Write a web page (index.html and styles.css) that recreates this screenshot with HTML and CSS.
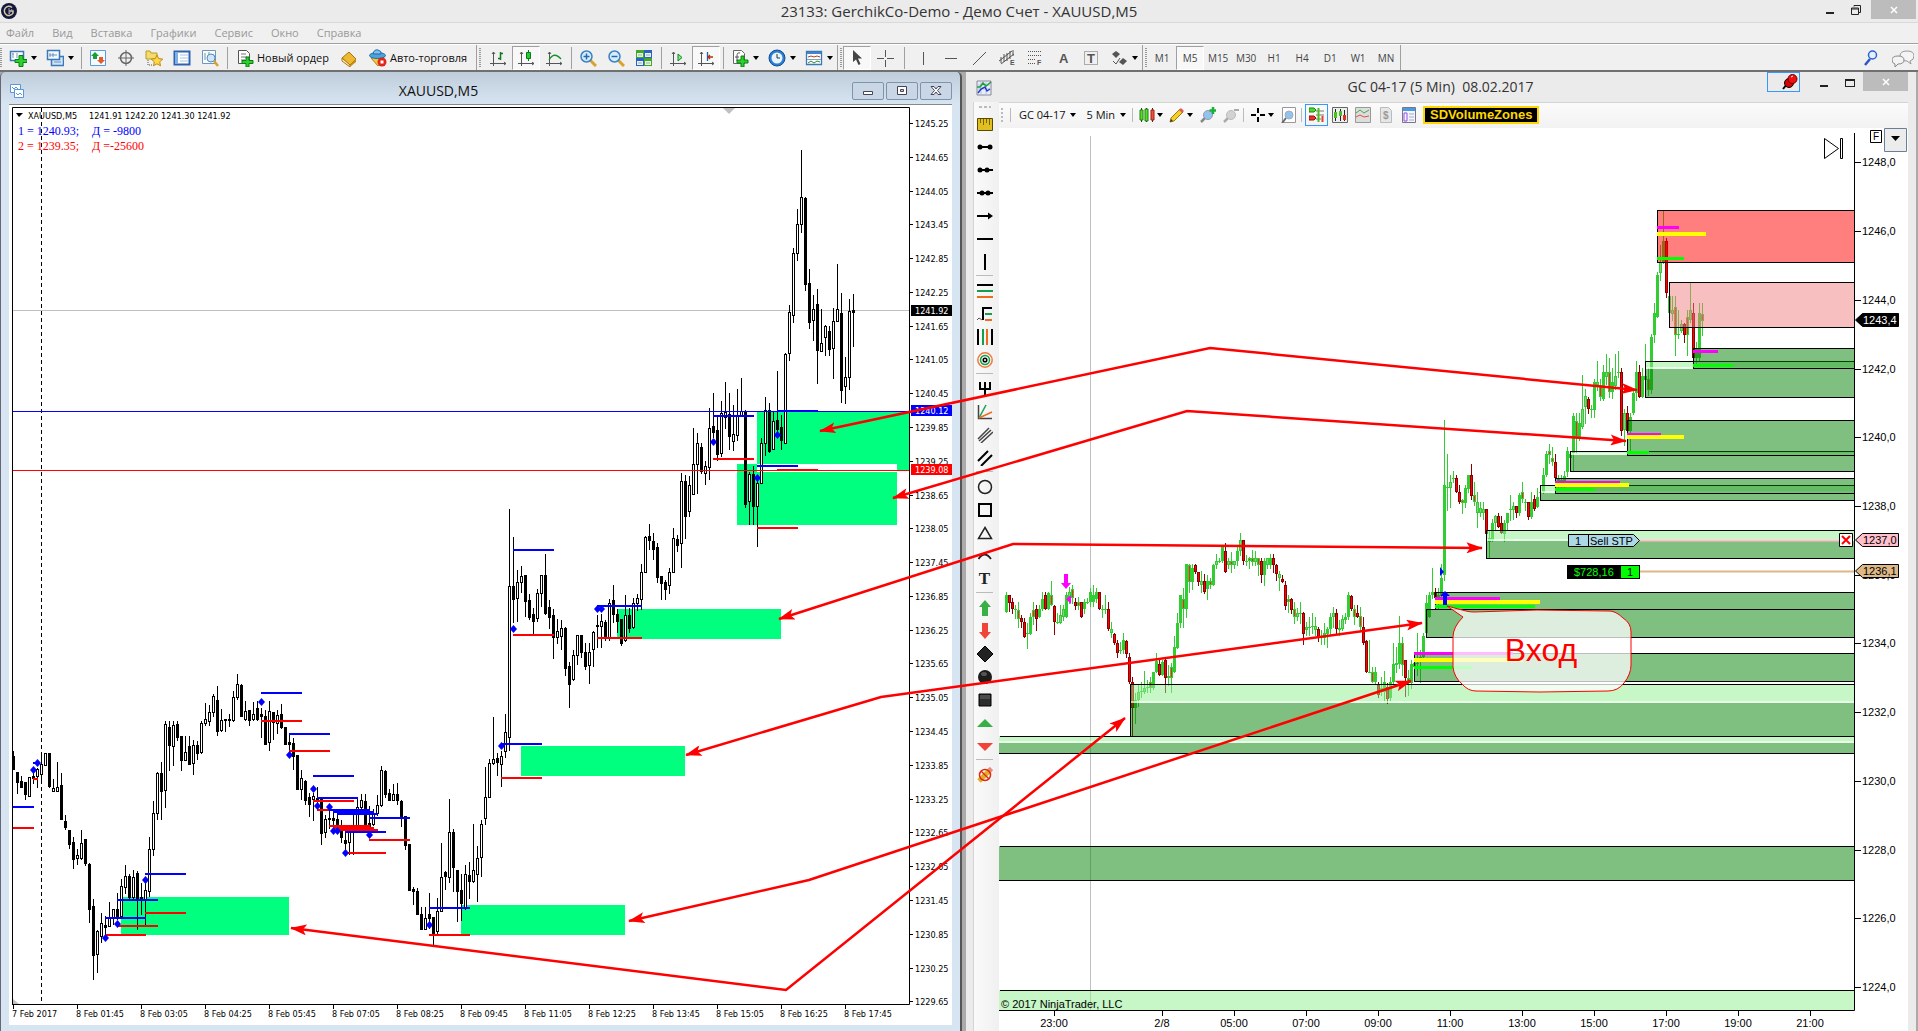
FILE: index.html
```
<!DOCTYPE html>
<html lang="ru">
<head>
<meta charset="utf-8">
<title>23133: GerchikCo-Demo - Демо Счет - XAUUSD,M5</title>
<link rel="stylesheet" href="styles.css">
</head>
<body>
<header class="titlebar">
  <svg class="app-logo" viewBox="0 0 16 16"><circle cx="8" cy="8" r="8" fill="#14183a"/><path d="M11 4.5A4.6 4.6 0 1 0 12 10V8H8" fill="none" stroke="#d8c9a4" stroke-width="1.5"/><path d="M8 5v6l3-5" fill="none" stroke="#9aa0c0"/></svg>
  <h1 class="title">23133: GerchikCo-Demo - Демо Счет - XAUUSD,M5</h1>
  <div class="win-controls">
    <button aria-label="Свернуть"><svg viewBox="0 0 12 12"><path d="M2 8h8v2H2z" fill="#222"/></svg></button>
    <button aria-label="Восстановить"><svg viewBox="0 0 12 12"><path d="M4 2.500V1.500h6.500v7H9M1.500 4h7v6.500h-7zM1.500 5h7" fill="none" stroke="#222"/></svg></button>
    <button class="close" aria-label="Закрыть"><svg viewBox="0 0 12 12"><path d="M3 3l6 6M9 3l-6 6" stroke="#fff" stroke-width="1.500"/></svg></button>
  </div>
</header>
<nav class="menu">
  <button>Файл</button><button>Вид</button><button>Вставка</button><button>Графики</button><button>Сервис</button><button>Окно</button><button>Справка</button>
</nav>
<div class="toolbar">
  <div class="group">
    <button class="tool drop" aria-label="Новый график"><svg viewBox="0 0 18 18"><path d="M1.500 2.500h13v9h-13z" fill="#fff" stroke="#3a78b8" stroke-width="1.500"/><path d="M4 4v5m-1-4h2M8 4v5" stroke="#7898b8"/><path d="M10 6.500h4v4h4v3h-4v4h-4v-4H6v-3h4z" fill="#2cd22c" stroke="#0b7d14"/></svg></button>
    <button class="tool drop" aria-label="Профили"><svg viewBox="0 0 18 18"><path d="M5.500 7.500h12v9h-12z" fill="#cfe4f6" stroke="#3a78b8" stroke-width="1.500"/><path d="M1.500 1.500h12v9h-12z" fill="#f4f9ff" stroke="#3a78b8" stroke-width="1.500"/><path d="M4 4v4m3-4v4M3 6h8M8 13h7" stroke="#6b95bd"/></svg></button>
    <span class="sep"></span>
    <button class="tool" aria-label="Обзор рынка"><svg viewBox="0 0 18 18"><path d="M1.500 1.500h15v15h-15z" fill="#f5faff" stroke="#5b9bd8"/><path d="M6 3l4 4H8v3H4V7H2z" fill="#18a030"/><path d="M12 15l-4-4h2V8h4v3h2z" fill="#e65a2a"/></svg></button>
    <button class="tool" aria-label="Окно данных"><svg viewBox="0 0 18 18"><circle cx="9" cy="9" r="5.500" fill="none" stroke="#666" stroke-width="1.500"/><path d="M9 1v16M1 9h16" stroke="#666"/></svg></button>
    <button class="tool" aria-label="Навигатор"><svg viewBox="0 0 18 18"><path d="M1 2h4l1 2h6v6H1z" fill="#f3dc6a" stroke="#b79a28"/><path d="M3 11v5h4" fill="none" stroke="#555" stroke-dasharray="1 1"/><path d="M12 6l1.700 3.600 4 .5-3 2.700.8 4-3.500-2-3.500 2 .8-4-3-2.700 4-.5z" fill="#ffd84a" stroke="#c08a10"/></svg></button>
    <button class="tool" aria-label="Терминал"><svg viewBox="0 0 18 18"><path d="M1.500 2.500h15v13h-15z" fill="#fff" stroke="#2f62b0" stroke-width="2"/><path d="M2 3h3v12H2z" fill="#7fb0e6"/><path d="M7 6h8M7 9h8M7 12h8" stroke="#aac4e2"/></svg></button>
    <button class="tool" aria-label="Тестер стратегий"><svg viewBox="0 0 18 18"><path d="M1.500 1.500h13v13h-13z" fill="#f6fbff" stroke="#6f97bd"/><path d="M4 4v7M8 3v6M12 5v5" stroke="#7a93ab"/><circle cx="10" cy="9" r="4" fill="#cfe6f8" stroke="#5b8ab8"/><path d="M13 12l4 5" stroke="#d9a32a" stroke-width="2.500"/></svg></button>
    <span class="sep"></span>
    <button class="tool wide"><svg viewBox="0 0 18 18"><path d="M2.500 1.500h8l3 3v10h-11z" fill="#fff" stroke="#555"/><path d="M5 5h5M5 8h6M5 11h4" stroke="#777"/><path d="M10 8h3v3.500h4v3h-4V18h-3v-3.500H6v-3h4z" fill="#2cd22c" stroke="#0b7d14"/></svg>Новый ордер</button>
    <button class="tool" aria-label="MetaEditor"><svg viewBox="0 0 18 18"><path d="M2 9l7-6 7 7-6 6z" fill="#eeb930" stroke="#a37512"/><path d="M2 9v3l8 6v-2z" fill="#fff0b8" stroke="#a37512"/><path d="M10 16l6-6v3l-6 5z" fill="#c98e18"/></svg></button>
    <button class="tool wide"><svg viewBox="0 0 18 18"><path d="M2 9l12-2 1 4-6 6z" fill="#f0c445" stroke="#b48413"/><ellipse cx="8.500" cy="6.500" rx="8" ry="3" fill="#4da3dc" stroke="#1f6ca8"/><path d="M4 5q1-5 5-4t3 4z" fill="#7cc2ee" stroke="#1f6ca8"/><circle cx="13" cy="13" r="4.500" fill="#e02818"/><path d="M11.500 11.500h3v3h-3z" fill="#fff"/></svg>Авто-торговля</button>
  </div>
  <div class="group">
    <button class="tool" aria-label="Бары"><svg viewBox="0 0 18 18"><path d="M4.500 3v14M1 14.500h16M3 5l1.500-2L6 5M15 13l2 1.500-2 1.500" fill="none" stroke="#555"/><path d="M11.500 3v8M9 9.500h2.500M11.500 4.500H14" stroke="#0a7a1a" stroke-width="1.500"/></svg></button>
    <button class="tool on" aria-label="Свечи"><svg viewBox="0 0 18 18"><path d="M4.500 3v14M1 14.500h16M3 5l1.500-2L6 5M15 13l2 1.500-2 1.500" fill="none" stroke="#555"/><path d="M11.500 1v11" stroke="#0a7a1a"/><path d="M9.500 3.500h4v6h-4z" fill="#20d030" stroke="#0a7a1a"/></svg></button>
    <button class="tool" aria-label="Линия"><svg viewBox="0 0 18 18"><path d="M4.500 3v14M1 14.500h16M3 5l1.500-2L6 5M15 13l2 1.500-2 1.500" fill="none" stroke="#555"/><path d="M4 11q5-9 12-1" fill="none" stroke="#18902a" stroke-width="1.300"/></svg></button>
    <span class="sep"></span>
    <button class="tool" aria-label="Увеличить"><svg viewBox="0 0 18 18"><path d="M11 11l6 6" stroke="#d9a32a" stroke-width="3"/><circle cx="7.500" cy="7.500" r="5.500" fill="#d6ecfb" stroke="#3a82c4" stroke-width="1.500"/><path d="M4.500 7.500h6M7.500 4.500v6" stroke="#2568b0" stroke-width="1.500"/></svg></button>
    <button class="tool" aria-label="Уменьшить"><svg viewBox="0 0 18 18"><path d="M11 11l6 6" stroke="#d9a32a" stroke-width="3"/><circle cx="7.500" cy="7.500" r="5.500" fill="#d6ecfb" stroke="#3a82c4" stroke-width="1.500"/><path d="M4.500 7.500h6" stroke="#2568b0" stroke-width="1.500"/></svg></button>
    <button class="tool" aria-label="Окна мозаикой"><svg viewBox="0 0 18 18"><path d="M1 1h8v8H1zM9 9h8v8H9z" fill="#42a828"/><path d="M9 1h8v8H9zM1 9h8v8H1z" fill="#2a62c8"/><path d="M2 4h6v4H2zM10 4h6v4h-6zM2 12h6v4H2zM10 12h6v4h-6z" fill="#eaf4e6"/><path d="M3 6h4M11 6h4M3 14h4M11 14h4" stroke="#9ab"/></svg></button>
    <span class="sep"></span>
    <button class="tool" aria-label="Автопрокрутка"><svg viewBox="0 0 18 18"><path d="M4.500 3v14M1 14.500h16M3 5l1.500-2L6 5M15 13l2 1.500-2 1.500" fill="none" stroke="#555"/><path d="M9 5v7l4-3.500z" fill="#8fe090" stroke="#0a8a20"/></svg></button>
    <button class="tool on" aria-label="Сдвиг графика"><svg viewBox="0 0 18 18"><path d="M4.500 3v14M1 14.500h16M3 5l1.500-2L6 5M15 13l2 1.500-2 1.500" fill="none" stroke="#555"/><path d="M10.500 3v9" stroke="#1a62b0" stroke-width="1.300"/><path d="M16 8h-5m2-2l-2 2 2 2" stroke="#b03010" fill="none" stroke-width="1.300"/></svg></button>
    <span class="sep"></span>
    <button class="tool drop" aria-label="Индикаторы"><svg viewBox="0 0 18 18"><path d="M2.500 1.500h8l3 3v10h-11z" fill="#fff" stroke="#666"/><path d="M9 4q-3-1-3 3v5M4 8h4" fill="none" stroke="#555"/><path d="M10 7h3v4h4v3h-4v4h-3v-4H6v-3h4z" fill="#2cd22c" stroke="#0b7d14"/></svg></button>
    <button class="tool drop" aria-label="Периоды"><svg viewBox="0 0 18 18"><circle cx="9" cy="9" r="8" fill="#2a7ed2" stroke="#0f4f96"/><circle cx="9" cy="9" r="5.500" fill="#e8f4fd"/><path d="M9 5v4h3" fill="none" stroke="#333"/></svg></button>
    <button class="tool drop" aria-label="Шаблоны"><svg viewBox="0 0 18 18"><path d="M1.500 2.500h15v13h-15z" fill="#fff" stroke="#3a78b8" stroke-width="1.300"/><path d="M2 3h14v2H2z" fill="#3f86cc"/><path d="M2 10.500h14" stroke="#7aa4cc"/><path d="M3 8l3-1 3 1 3-1 3 1" fill="none" stroke="#b04020"/><path d="M3 14l3-2 3 2 3-2 3 1" fill="none" stroke="#209030"/></svg></button>
  </div>
  <div class="group">
    <button class="tool on" aria-label="Курсор"><svg viewBox="0 0 18 18"><path d="M5 1v12l3-2.500 2.500 5.500 2-1-2.500-5.500h4z" fill="#444"/></svg></button>
    <button class="tool" aria-label="Перекрестие"><svg viewBox="0 0 18 18"><path d="M9.500 1v7m0 3v7M1 9.500h7m3 0h7" stroke="#555"/></svg></button>
    <span class="sep roomy"></span>
    <button class="tool" aria-label="Вертикальная линия"><svg viewBox="0 0 18 18"><path d="M9.500 3v13" stroke="#555"/></svg></button>
    <button class="tool" aria-label="Горизонтальная линия"><svg viewBox="0 0 18 18"><path d="M3 9.500h12" stroke="#555"/></svg></button>
    <button class="tool" aria-label="Трендовая линия"><svg viewBox="0 0 18 18"><path d="M3 16L16 3" stroke="#555"/></svg></button>
    <button class="tool" aria-label="Канал"><svg viewBox="0 0 18 18"><path d="M1 12L14 2M3 15L16 5M3 8v6M6 5v8M9 4v8M12 2v8M15 1v6" stroke="#555"/><text x="12" y="16" class="glyph tiny">E</text></svg></button>
    <button class="tool" aria-label="Фибоначчи"><svg viewBox="0 0 18 18"><path d="M2 2.500h13M2 6.500h13M2 10.500h7M2 14.500h7" stroke="#555" stroke-dasharray="1 1"/><text x="11" y="16" class="glyph tiny">F</text></svg></button>
    <button class="tool" aria-label="Текст"><svg viewBox="0 0 18 18"><text x="5" y="14" class="glyph">A</text></svg></button>
    <button class="tool" aria-label="Метка"><svg viewBox="0 0 18 18"><path d="M2.500 2.500h13v13h-13z" fill="none" stroke="#666" stroke-dasharray="1 1"/><text x="5" y="14" class="glyph">T</text></svg></button>
    <button class="tool drop" aria-label="Стрелки"><svg viewBox="0 0 18 18"><path d="M6 2l4 3-4 4-4-4zM13 9l4 3-4 4-4-3z" fill="#555"/><path d="M3 12l3 3 4-6" fill="none" stroke="#555"/></svg></button>
  </div>
  <div class="group">
    <button class="tool tf">M1</button><button class="tool tf on">M5</button><button class="tool tf">M15</button><button class="tool tf">M30</button><button class="tool tf">H1</button><button class="tool tf">H4</button><button class="tool tf">D1</button><button class="tool tf">W1</button><button class="tool tf">MN</button>
  </div>
  <div class="right-tools">
    <button class="tool" aria-label="Поиск"><svg viewBox="0 0 18 18"><path d="M8 10l-5 6" stroke="#2a56c8" stroke-width="2.500"/><circle cx="10.500" cy="6" r="4" fill="#e6f0fb" stroke="#2a62d0" stroke-width="1.500"/></svg></button>
    <button class="tool chat" aria-label="Чат"><svg viewBox="0 0 22 18"><path d="M8 7q0-5 7-5t7 5q0 4-4 5l1 3-4-3q-7 0-7-5z" fill="#f4f4f4" stroke="#999"/><path d="M0 11q0-4 6-4t6 4-6 4l-3 3v-3q-3-1-3-4z" fill="#f4f4f4" stroke="#888"/></svg></button>
  </div>
</div>
<main class="workspace">
  <section class="mt">
    <header class="mt-title">
      <svg class="icon" viewBox="0 0 16 16"><path d="M1.500 1.500h10v8h-10z" fill="#fff" stroke="#5a96dc"/><path d="M5.500 6.500h9v8h-9z" fill="#fff" stroke="#5a96dc"/><path d="M3 4l2 2 2-2 2 2M7 10l2 2 2-2 2 2" fill="none" stroke="#5a96dc"/></svg>
      <h2 class="title">XAUUSD,M5</h2>
      <div class="mt-controls">
        <button aria-label="Свернуть окно"><svg viewBox="0 0 14 12"><path d="M2.500 6.500h9v3h-9z" fill="#fff" stroke="#445"/></svg></button>
        <button aria-label="Развернуть окно"><svg viewBox="0 0 14 12"><path d="M2.500 1.500h9v8h-9z" fill="#fff" stroke="#445"/><path d="M5.500 4.500h3v2h-3z" fill="#ccd" stroke="#445"/></svg></button>
        <button aria-label="Закрыть окно"><svg viewBox="0 0 14 12"><path d="M2 1.500h3l2 2.500 2-2.500h3L8.500 5.500 12 9.500H9L7 7 5 9.500H2l3.500-4z" fill="#fff" stroke="#445"/></svg></button>
      </div>
    </header>
    <div class="mt-client">
      <svg class="chart" id="mt-chart" viewBox="9 105 943 920" preserveAspectRatio="xMinYMin meet">
        <g fill="#00ff7f">
          <path d="M757 412h152v59h-12v-7H757z"/><path d="M737 464h20v8h140v53H737z"/>
          <rect x="617" y="609" width="164" height="30"/><rect x="521" y="746" width="164" height="30"/>
          <rect x="461" y="905" width="164" height="30"/><rect x="121" y="897" width="168" height="38"/>
        </g>
        <path d="M13 310.500h896" stroke="#c0c0c0"/>
        <path d="M41.500 108v896" stroke="#000" stroke-dasharray="4 3"/>
        <g id="mt-candles" shape-rendering="crispEdges"></g>
        <path d="M13 411.500h896" stroke="#0000ff"/><path d="M13 470.500h896" stroke="#ff0000"/>
        <g id="mt-levels"></g>
        <path d="M12.500 1004V107.500h897V1004.500H12" fill="none" stroke="#000"/>
        <path d="M13 999l6 5h-6z" fill="#c0c0c0"/><path d="M723 108h12l-6 6z" fill="#c0c0c0"/>
        <g id="mt-axis" class="mt-text"></g>
        <path d="M16 113h7l-4 4z"/>
        <text x="28" y="119" class="mt-text">XAUUSD,M5</text><text x="89" y="119" class="mt-text">1241.91 1242.20 1241.30 1241.92</text>
        <text x="18" y="135" class="times" fill="#0000ff">1 = 1240.93;</text><text x="92" y="135" class="times" fill="#0000ff">Д = -9800</text>
        <text x="18" y="150" class="times" fill="#ff0000">2 = 1239.35;</text><text x="92" y="150" class="times" fill="#ff0000">Д =-25600</text>
      </svg>
    </div>
  </section>
  <section class="nt">
    <header class="nt-title">
      <svg class="icon" viewBox="0 0 16 16"><path d="M1 1h14v14H1z" fill="#e8ecfa" stroke="#889"/><path d="M1 5h14M1 9h14M5 1v14M10 1v14" stroke="#b9c2dc"/><path d="M1 7h3l3-4 3 3 5-4" fill="none" stroke="#20a030" stroke-width="1.500"/><path d="M2 13l3-4 4-2 2 4 3-2" fill="none" stroke="#2040c0" stroke-width="1.500"/></svg>
      <h2 class="title">GC 04-17 (5 Min)&nbsp; 08.02.2017</h2>
      <div class="nt-controls">
        <button class="pin" aria-label="Закрепить"><svg viewBox="0 0 16 16"><path d="M5 10l-4 5" stroke="#000" stroke-width="2"/><circle cx="7" cy="9" r="4.500" fill="#d80000" stroke="#000"/><circle cx="10.500" cy="5" r="4.500" fill="#f01010" stroke="#600"/><path d="M9 3l2-1" stroke="#fff"/></svg></button>
        <button aria-label="Свернуть"><svg viewBox="0 0 12 12"><path d="M2 9h8v2H2z" fill="#222"/></svg></button>
        <button aria-label="Развернуть"><svg viewBox="0 0 12 12"><path d="M1 3h10v8H1zM2 5v5h8V5z" fill="#222" fill-rule="evenodd"/></svg></button>
        <button class="close" aria-label="Закрыть"><svg viewBox="0 0 12 12"><path d="M3 3l6 6M9 3l-6 6" stroke="#fff" stroke-width="1.500"/></svg></button>
      </div>
    </header>
    <div class="nt-body">
      <div class="draw-tools">
        <span class="dots"></span>
        <button aria-label="Линейка"><svg viewBox="0 0 16 16"><path d="M.5 2.500h15v12H.5z" fill="#e0c020" stroke="#5a4a00"/><path d="M3.500 3v4M6.500 3v6M9.500 3v4M12.500 3v6" stroke="#7a6400"/></svg></button>
        <button aria-label="Отрезок"><svg viewBox="0 0 16 16"><path d="M2 8h12" stroke="#000" stroke-width="2"/><circle cx="3" cy="8" r="2.500"/><circle cx="13" cy="8" r="2.500"/></svg></button>
        <button aria-label="Луч"><svg viewBox="0 0 16 16"><path d="M2 8h14" stroke="#000" stroke-width="2"/><circle cx="3" cy="8" r="2.500"/><circle cx="10" cy="8" r="2.500"/></svg></button>
        <button aria-label="Прямая"><svg viewBox="0 0 16 16"><path d="M0 8h16" stroke="#000" stroke-width="2"/><circle cx="5" cy="8" r="2.500"/><circle cx="11" cy="8" r="2.500"/></svg></button>
        <button aria-label="Стрелка"><svg viewBox="0 0 16 16"><path d="M0 8h13" stroke="#000" stroke-width="2"/><path d="M11 4.500L16 8l-5 3.500z"/></svg></button>
        <button aria-label="Горизонталь"><svg viewBox="0 0 16 16"><path d="M0 8h16" stroke="#000" stroke-width="2"/></svg></button>
        <button aria-label="Вертикаль"><svg viewBox="0 0 16 16"><path d="M8 0v16" stroke="#000" stroke-width="2"/></svg></button>
        <hr>
        <button aria-label="Коррекция"><svg viewBox="0 0 16 16"><path d="M0 2h16" stroke="#000" stroke-width="2"/><path d="M0 8h16" stroke="#12a04a" stroke-width="2"/><path d="M0 14h16" stroke="#f06a20" stroke-width="2"/></svg></button>
        <button aria-label="Расширение"><svg viewBox="0 0 16 16"><path d="M15 2H6v12" fill="none" stroke="#000" stroke-width="2"/><path d="M8 8h7" stroke="#12a04a" stroke-width="2"/><path d="M8 14h7" stroke="#f06a20" stroke-width="2"/><path d="M0 14l2-2 3 2" fill="none" stroke="#555"/></svg></button>
        <button aria-label="Временные зоны"><svg viewBox="0 0 16 16"><path d="M1 0v16M15 0v16" stroke="#000" stroke-width="2"/><path d="M6 0v16" stroke="#12a04a" stroke-width="2"/><path d="M10 0v16" stroke="#f06a20" stroke-width="2"/></svg></button>
        <button aria-label="Окружности"><svg viewBox="0 0 16 16"><g fill="none" stroke-width="1.500"><circle cx="8" cy="8" r="7.200" stroke="#f07a40"/><circle cx="8" cy="8" r="4.500" stroke="#12a04a"/><circle cx="8" cy="8" r="1.800" stroke="#000"/></g></svg></button>
        <hr>
        <button aria-label="Вилы"><svg viewBox="0 0 16 16"><path d="M3 1v7h10V1M8 1v15" fill="none" stroke="#000" stroke-width="2"/></svg></button>
        <button aria-label="Веер Ганна"><svg viewBox="0 0 16 16"><path d="M1.500 1v13.500H15" fill="none" stroke="#444" stroke-width="1.500"/><path d="M2 14L9 1" stroke="#12a04a" stroke-width="1.500"/><path d="M2 14l13-6" stroke="#f06a20" stroke-width="1.500"/></svg></button>
        <button aria-label="Регрессия"><svg viewBox="0 0 16 16"><path d="M1 12L12 1M2 14L14 3M4 16L16 5" stroke="#444" stroke-width="1.500"/></svg></button>
        <button aria-label="Канал тренда"><svg viewBox="0 0 16 16"><path d="M1 11L11 1M4 16L15 5" stroke="#000" stroke-width="2"/></svg></button>
        <hr>
        <button aria-label="Эллипс"><svg viewBox="0 0 16 16"><circle cx="8" cy="8" r="6.500" fill="none" stroke="#222" stroke-width="1.500"/></svg></button>
        <button aria-label="Прямоугольник"><svg viewBox="0 0 16 16"><path d="M2 2h12v12H2z" fill="none" stroke="#000" stroke-width="2"/></svg></button>
        <button aria-label="Треугольник"><svg viewBox="0 0 16 16"><path d="M8 2.500L14.500 13.500h-13z" fill="none" stroke="#222" stroke-width="1.500"/></svg></button>
        <button aria-label="Дуга"><svg viewBox="0 0 16 16"><path d="M1.500 11q6-9 12.500 0" fill="none" stroke="#222" stroke-width="1.800"/></svg></button>
        <button class="serif-t" aria-label="Надпись">T</button>
        <hr>
        <button aria-label="Стрелка вверх"><svg viewBox="0 0 16 16"><path d="M8 0l6 7h-3v9H5V7H2z" fill="#38b048"/></svg></button>
        <button aria-label="Стрелка вниз"><svg viewBox="0 0 16 16"><path d="M8 16l6-7h-3V0H5v9H2z" fill="#f04438"/></svg></button>
        <button aria-label="Ромб"><svg viewBox="0 0 16 16"><path d="M8 0l8 8-8 8-8-8z" fill="#222" stroke="#000"/></svg></button>
        <button aria-label="Точка"><svg viewBox="0 0 16 16"><circle cx="8" cy="8" r="7" fill="#1c1c1c"/><ellipse cx="7" cy="5" rx="3" ry="2" fill="#555"/></svg></button>
        <button aria-label="Квадрат"><svg viewBox="0 0 16 16"><path d="M2 2h12v12H2z" fill="#2c2c2c" stroke="#000"/><path d="M3 3h10v4H3z" fill="#4c4c4c"/></svg></button>
        <button aria-label="Треугольник вверх"><svg viewBox="0 0 16 16"><path d="M8 4l8 8H0z" fill="#38b048"/></svg></button>
        <button aria-label="Треугольник вниз"><svg viewBox="0 0 16 16"><path d="M8 13l8-8H0z" fill="#f04438"/></svg></button>
        <hr>
        <button aria-label="Удалить объекты"><svg viewBox="0 0 16 16"><path d="M2 14L14 2" stroke="#e0b020" stroke-width="5"/><path d="M12 1l3 3" stroke="#e88" stroke-width="3"/><circle cx="8" cy="8" r="5.500" fill="none" stroke="#e02818" stroke-width="1.500"/><path d="M4 4l8 8" stroke="#e02818" stroke-width="1.500"/></svg></button>
      </div>
      <div class="nt-main">
        <div class="nt-toolbar">
          <span class="vdots"></span><span class="bar"></span>
          <button class="combo">GC 04-17</button><button class="combo">5 Min</button>
          <span class="bar"></span>
          <button class="nt-tool nt-drop" aria-label="Тип баров"><svg viewBox="0 0 16 16"><path d="M2.500 1v14M7.500 1v14M13.500 1v14" stroke="#333"/><path d="M1 3h3v10H1zM6 2h3v12H6z" fill="#58e020" stroke="#208010"/><path d="M12 3h3v10h-3z" fill="#f05040" stroke="#a02010"/></svg></button>
          <button class="nt-tool nt-drop" aria-label="Рисование"><svg viewBox="0 0 16 16"><path d="M1 15l1-4 9-9 3 3-9 9z" fill="#f4d020" stroke="#a07810"/><path d="M10 3l2-2 3 3-2 2z" fill="#e05a5a"/><path d="M1 15l1-3 2 2z" fill="#333"/></svg></button>
          <button class="nt-tool" aria-label="Увеличить"><svg viewBox="0 0 16 16"><path d="M6 10l-5 5" stroke="#888" stroke-width="2.500"/><circle cx="8" cy="8" r="4.500" fill="#8ec4ee" stroke="#99a"/><path d="M13 0v7M9.500 3.500h7" stroke="#18b038" stroke-width="2.500"/></svg></button>
          <button class="nt-tool" aria-label="Уменьшить"><svg viewBox="0 0 16 16"><path d="M6 10l-5 5" stroke="#aaa" stroke-width="2.500"/><circle cx="8" cy="8" r="4.500" fill="#d2d2d2" stroke="#bbb"/><path d="M11 3h5" stroke="#aaa" stroke-width="2"/></svg></button>
          <span class="bar"></span>
          <button class="nt-tool nt-drop" aria-label="Курсор"><svg viewBox="0 0 16 16"><path d="M8 1v5m0 4v5M1 8h5m4 0h5" stroke="#000" stroke-width="2"/></svg></button>
          <button class="nt-tool" aria-label="Лупа"><svg viewBox="0 0 16 16"><path d="M1.500.5h13v15h-13z" fill="#fff" stroke="#999"/><path d="M5 11l-4 5" stroke="#667" stroke-width="2"/><circle cx="8" cy="8" r="4" fill="#8ec4ee" stroke="#aab"/></svg></button>
          <span class="bar"></span>
          <button class="nt-tool selected" aria-label="Торговля с графика"><svg viewBox="0 0 16 16"><path d="M7 4h8M7 8h8M7 12h5" stroke="#777"/><path d="M0 1h5l2 2-2 2H0z" fill="#48e020" stroke="#208010"/><path d="M0 9h5l2 2-2 2H0z" fill="#f03020" stroke="#901010"/><path d="M9.500 1v14" stroke="#48c020" stroke-width="2"/><path d="M13.500 9v6" stroke="#e04030" stroke-width="2"/></svg></button>
          <button class="nt-tool" aria-label="Данные"><svg viewBox="0 0 16 16"><path d="M.5.500h15v15H.500z" fill="#eee" stroke="#666"/><path d="M3.500 2v12M8.500 2v12M12.500 3v11" stroke="#222"/><path d="M2 5h3v6H2zM7 4h3v5H7z" fill="#48c020"/><path d="M11 8h3v5h-3z" fill="#e03020"/></svg></button>
          <button class="nt-tool" aria-label="Индикаторы"><svg viewBox="0 0 16 16"><path d="M.5.500h15v15H.500z" fill="#ddd" stroke="#999"/><path d="M1 6l4-3 4 3 5-3" fill="none" stroke="#38b048"/><path d="M1 10l4-2 4 2 5-1" fill="none" stroke="#e05040"/></svg></button>
          <button class="nt-tool" aria-label="Стратегии"><svg viewBox="0 0 16 16"><path d="M2.500.500h8l3 3v12h-11z" fill="#e6e6e6" stroke="#bbb"/><text x="5" y="12" class="dollar">$</text></svg></button>
          <button class="nt-tool" aria-label="Свойства"><svg viewBox="0 0 16 16"><path d="M1.500.500h13v15h-13z" fill="#f4f4ff" stroke="#778"/><path d="M2 1h12v3H2z" fill="#4a9ae0"/><path d="M3 6h3v8H3z" fill="none" stroke="#9050e0"/><path d="M8 7h5M8 10h5M8 13h5" stroke="#aab"/></svg></button>
          <button class="zones">SDVolumeZones</button>
        </div>
        <svg class="chart" id="nt-chart" viewBox="999 128 909 903" preserveAspectRatio="xMinYMin meet">
          <path d="M1090.500 136v874" stroke="#c0c0c0"/>
          <g id="nt-candles" shape-rendering="crispEdges"></g>
          <g id="nt-zones" shape-rendering="crispEdges"></g>
          <path d="M1064 574h4v9h3l-5 6-5-6h3zM1071 595v9l-5-5z" fill="#ff00ff"/>
          <path d="M1440 567v9l4-4zM1443 605v-9h-3l5-5 5 5h-3v9z" fill="#0000ff"/>
          <path d="M1639 540.500h200" stroke="#ffc0cb" stroke-width="2"/><path d="M1640 571.500h215" stroke="#deb887" stroke-width="2"/>
          <path d="M1568.500 534.500h65l6 6-6 6h-65zM1588.500 534v12" fill="#add8e6" stroke="#000"/>
          <text x="1575" y="545" class="nt-text">1</text><text x="1590" y="545" class="nt-text">Sell STP</text>
          <path d="M1567 565h73v14h-73z"/><path d="M1621 566h18v12h-18z" fill="#00ff00"/>
          <text x="1574" y="576" class="nt-text lime">$728,16</text><text x="1627" y="576" class="nt-text">1</text>
          <path d="M1854.500 133v877.500H999M1824.500 138.500v20l14-10zM1840.500 138.500h2v20h-2z" fill="none" stroke="#000"/>
          <path d="M1870.500 130.500h11v12h-11z" fill="#fff" stroke="#000"/><text x="1873" y="140" class="f-mark">F</text>
          <path d="M1884.500 128.500h22v23h-22z" fill="#ececec" stroke="#6a7f98"/><path d="M1891 136h9l-4.500 5z"/>
          <g id="nt-axis" class="nt-text"></g>
          <path d="M1839.500 533.500h13v13h-13z" fill="#fff" stroke="#000"/><path d="M1842 536l8 8m0-8l-8 8" stroke="#ff0000" stroke-width="2"/>
          <text x="1001" y="1008" class="nt-text">© 2017 NinjaTrader, LLC</text>
        </svg>
      </div>
    </div>
  </section>
</main>
<svg class="notes" viewBox="0 0 1918 1031" preserveAspectRatio="xMinYMin meet" aria-label="Пояснения к графикам">
  <defs><marker id="head" viewBox="0 0 18 12" refX="17" refY="6" markerWidth="17" markerHeight="11" markerUnits="userSpaceOnUse" orient="auto-start-reverse"><path d="M18 6L0 12 4 6 0 0z" fill="#ff0000"/></marker></defs>
  <g fill="none" stroke="#ff0000" stroke-width="2.500">
    <path d="M820 431L1210 348 1637 390" marker-start="url(#head)" marker-end="url(#head)"/>
    <path d="M893 498L1187 411 1626 441" marker-start="url(#head)" marker-end="url(#head)"/>
    <path d="M779 619L1013 544 1482 548" marker-start="url(#head)" marker-end="url(#head)"/>
    <path d="M686 755L881 697 1422 623" marker-start="url(#head)" marker-end="url(#head)"/>
    <path d="M629 921L809 880 1411 681" marker-start="url(#head)" marker-end="url(#head)"/>
    <path d="M291 928L786 990 1125 718" marker-start="url(#head)" marker-end="url(#head)"/>
  </g>
  <path d="M1447 606l16 11q-10 10-10 20v30q1 10 9 17 6 7 14 7l64 1 68-1q10 0 16-8 7-9 7-18v-33q0-9-8-14-8-8-16-7l-70-1-63 2q-4 0-8-1z" fill="#fff" fill-opacity=".74" stroke="#ff0000"/>
  <text x="1541" y="661" class="callout">Вход</text>
</svg>
<script src="charts.js"></script>
</body>
</html>
```
FILE: styles.css
```
* { box-sizing: border-box; }
body {
  margin: 0;
  min-height: 100vh;
  display: flex;
  flex-direction: column;
  position: relative;
  overflow: hidden;
  background: #ababab;
  font: 11px/16px "Open Sans", "Noto Sans", sans-serif;
  color: #111;
}
button { padding: 0; border: 0; background: none; font: inherit; color: inherit; }
svg { display: block; }
h1, h2 { margin: 0; font-weight: 400; }

.titlebar {
  display: grid;
  grid-template-columns: 1fr auto 1fr;
  align-items: start;
  height: 23px;
  background: #ebebeb;
  border-bottom: 1px solid #d9d9d9;
}
.app-logo { width: 16px; height: 16px; margin: 3px 0 0 1px; }
.title { font-size: 14px; line-height: 22px; color: #333; text-align: center; }
.titlebar .title { font-size: 15px; }
.win-controls, .nt-controls { display: flex; justify-content: flex-end; }
.win-controls button, .nt-controls button { display: grid; place-items: center; width: 26px; height: 19px; }
.win-controls svg, .nt-controls svg { width: 12px; height: 12px; }
.win-controls { padding-right: 2px; }
.win-controls .close, .nt-controls .close { width: 45px; background: #bcbcbc; }
.win-controls .close { margin-left: 2px; }

.menu {
  display: flex;
  gap: 18px;
  height: 21px;
  padding: 0 6px;
  background: #f0f0f0;
  border-bottom: 1px solid #a0a0a0;
  color: #999;
}

.toolbar {
  display: flex;
  height: 28px;
  background: #f0f0f0;
  border-top: 1px solid #fff;
  border-bottom: 2px solid #707070;
}
.group { display: flex; align-items: center; padding-left: 5px; border-right: 1px solid #a0a0a0; position: relative; }
.group::before { content: ""; position: absolute; left: 2px; top: 3px; bottom: 3px; width: 2px; background: repeating-linear-gradient(#999 0 1px, #f0f0f0 1px 2px); }
.group:first-child::before { left: 0; }
.group:first-child { padding-left: 4px; padding-right: 3px; }
.group:nth-child(2) { padding-left: 7px; }
.tool { display: flex; align-items: center; justify-content: center; width: 28px; height: 24px; white-space: nowrap; flex: none; }
.tool svg { width: 18px; height: 18px; flex: none; }
.tool.on { background: #f8f8f8; border: 1px solid; border-color: #a0a0a0 #fff #fff #a0a0a0; }
.drop { width: 37px; justify-content: flex-start; padding-left: 5px; gap: 4px; }
.drop::after, .nt-drop::after, .combo::after { content: ""; border: 3px solid transparent; border-top: 4px solid #000; border-bottom: 0; flex: none; }
.wide { width: auto; padding: 0 6px; gap: 3px; }
.tf { font-size: 10px; color: #444; }
.sep { width: 1px; height: 22px; margin: 0 2px 0 3px; background: #a0a0a0; }
.roomy { margin: 0 4px 0 5px; }
.glyph { font: bold 13px "Liberation Sans", sans-serif; fill: #555; }
.tiny { font-size: 7px; }
.right-tools { display: flex; align-items: center; margin-left: auto; gap: 4px; padding-right: 1px; }
.chat svg { width: 22px; }

.workspace { flex: 1; display: grid; grid-template-columns: 962fr 952fr; column-gap: 4px; min-height: 0; }
.mt, .nt { display: flex; flex-direction: column; min-width: 0; min-height: 0; }
.mt {
  padding: 0 8px 6px 8px;
  background: linear-gradient(#bfcddb, #d7e4f2 32px);
  border-left: 1px solid #667;
  border-right: 2px solid #555;
  border-radius: 5px 5px 0 0;
}
.mt-title { display: flex; align-items: center; justify-content: space-between; height: 32px; padding-top: 6px; }
.mt .icon, .nt .icon { width: 16px; height: 16px; }
.mt-title .title { flex: 1; color: #111; }
.mt-controls { display: flex; gap: 2px; }
.mt-controls button { display: grid; place-items: center; width: 32px; height: 18px; border: 1px solid #8093ad; border-radius: 2px; background: #c9d6e5; }
.mt-controls svg { width: 14px; height: 12px; }
.mt-client { flex: 1; min-height: 0; background: #fff; border-top: 1px solid #888; }
.chart { width: 100%; height: 100%; }
.mt-text { font: 9px "DejaVu Sans Condensed", "DejaVu Sans", sans-serif; }
.times { font: 12px "Liberation Serif", serif; }
.nt-text { font: 11px "Liberation Sans", sans-serif; }
.lime { fill: #00ff00; }
.f-mark { font: 10px "Liberation Sans", sans-serif; }
.mid { text-anchor: middle; }

.nt { background: #ebebeb; padding: 0 8px 0 7px; border-right: 2px solid #aaa; }
.nt-title { display: grid; grid-template-columns: 1fr auto 1fr; height: 30px; align-items: start; }
.nt-title .title { line-height: 30px; }
.nt-title .icon { margin: 8px 0 0 3px; }
.nt-controls .pin { width: 33px; height: 20px; border: 1px solid #3399ff; margin-right: 11px; padding-left: 12px; }
.nt-controls .pin svg { width: 16px; height: 16px; }
.nt-body { flex: 1; display: flex; min-height: 0; background: #fff; }
.draw-tools { width: 26px; display: flex; flex-direction: column; align-items: center; padding-right: 4px; background: linear-gradient(90deg, #fafafa, #f0f0f0); border-left: 1px solid #d4d4d4; }
.draw-tools button { display: grid; place-items: center; height: 23px; flex: none; }
.draw-tools svg { width: 16px; height: 16px; }
.draw-tools hr { width: 17px; height: 1px; margin: 2px 0 3px; border: 0; background: #bbb; flex: none; }
.dots { width: 12px; height: 2px; margin: 4px 0; flex: none; background: repeating-linear-gradient(90deg, #bbb 0 3px, transparent 3px 5px); }
.draw-tools .serif-t { font: bold 17px/23px "Liberation Serif", serif; color: #222; }
.nt-main { flex: 1; display: flex; flex-direction: column; min-width: 0; }
.nt-main .chart { flex: 1; min-height: 0; }
.nt-toolbar { display: flex; align-items: center; height: 26px; flex: none; padding-bottom: 1px; background: linear-gradient(#fbfbfb, #f2f2f2); border-top: 1px solid #d4d4d4; }
.vdots { width: 2px; height: 14px; margin: 0 6px 0 2px; background: repeating-linear-gradient(#bbb 0 2px, transparent 2px 4px); }
.bar { width: 1px; height: 14px; margin: 0 3px 0 1px; background: #bbb; }
.combo { display: flex; align-items: center; gap: 5px; padding: 0 5px; white-space: nowrap; }
.nt-tool { width: 23px; height: 22px; display: flex; align-items: center; justify-content: center; flex: none; }
.nt-tool svg { width: 16px; height: 16px; }
.nt-drop { width: 30px; gap: 2px; }
.selected { border: 1px solid #3399ff; }
.dollar { font: bold 10px "Liberation Sans", sans-serif; fill: #999; }
.zones { height: 18px; margin-left: 3px; padding: 0 5px; border: 2px solid #ffd700; background: #000; color: #ffd700; font: bold 13px/14px "Liberation Sans", sans-serif; }

.notes { position: absolute; left: 0; top: 0; width: 100%; height: 100%; pointer-events: none; }
.callout { font: 32px "Liberation Sans", sans-serif; fill: #ff0000; text-anchor: middle; }
```
FILE: charts.js
```
const el = (parent, name, attrs, text) => {
  const node = document.createElementNS('http://www.w3.org/2000/svg', name);
  for (const key in attrs) node.setAttribute(key, attrs[key]);
  if (text !== undefined) node.textContent = text;
  return document.getElementById(parent).appendChild(node);
};

// Each bar: high, body top, body bottom, low, kind. Values are units below the series' top line.
const parse = rows => rows.trim().split(/[;\n]+/).filter(Boolean).map(row => {
  const [h, t, b, l, kind] = row.trim().split(' ');
  return { h: +h, t: +t, b: +b, l: +l, kind };
});

function plot(target, series, paint) {
  parse(series.bars).forEach((bar, i) => {
    const y = v => Math.round(series.top + v / series.scale);
    paint(target, series.x + i * series.step, y(bar.h), y(bar.t), y(bar.b), y(bar.l), bar.kind);
  });
}

// f = falling (filled), u = rising (hollow)
const monoCandle = (g, x, h, t, b, l, kind) => {
  el(g, 'rect', { x, y: h, width: 1, height: Math.max(l, b) - h + 1 });
  const height = Math.max(b - t, 1) + 1;
  el(g, 'rect', { x: x - 1, y: t, width: 3, height });
  if (kind === 'u' && height > 2) el(g, 'rect', { x, y: t + 1, width: 1, height: height - 2, fill: '#fff' });
};

// r = falling, g = rising, o = rising outline, m = rising with red core
const colorCandle = (g, x, h, t, b, l, kind) => {
  const edge = kind === 'r' ? '#8b0000' : '#32cd32';
  el(g, 'rect', { x, y: h, width: 1, height: Math.max(l, b) - h + 1, fill: edge });
  const height = Math.max(b - t, 1);
  el(g, 'rect', { x: x - 1, y: t, width: 3, height, fill: edge });
  const core = { r: '#ff0000', m: '#ff2020', o: '#90c890' }[kind];
  if (core && height > 2) el(g, 'rect', { x, y: t + 1, width: 1, height: height - 2, fill: core });
};

plot('mt-candles', { x: 13, step: 4, top: 480, scale: 2.846, bars: `
770 785 823 823 f;832 832 860 890 f;842 858 873 875 f;860 860 893 907 f;845 846 900 900 u;835 843 847 862 f;820 822 843 875 u;783 808 838 858 u
778 778 812 812 u;778 778 870 875 f;850 877 884 884 u;802 875 884 884 u;835 868 965 965 f;953 970 987 993 f;997 997 1035 1048 f;1017 1030 1080 1105 f
1050 1067 1077 1092 u;997 1032 1076 1078 u;1022 1022 1090 1095 f;1090 1093 1220 1257 f;1192 1213 1352 1419 f;1280 1284 1348 1399 u;1233 1262 1297 1315 u;1240 1266 1271 1292 f
1202 1244 1269 1270 u;1220 1222 1243 1265 u;1175 1222 1244 1250 f;1135 1156 1242 1243 u;1096 1126 1157 1175 u;1122 1126 1188 1190 f;1110 1130 1188 1190 u;1112 1118 1194 1277 f
1147 1187 1194 1235 f;1147 1168 1194 1268 u;1017 1050 1170 1185 u;913 948 1050 1067 u;832 835 948 965 u;802 835 884 965 f;686 695 883 930 u;686 704 755 825 f
686 697 758 810 u;686 695 730 740 f;728 729 796 826 f;728 775 796 797 u;728 758 808 808 f;740 755 806 838 u;743 755 777 795 f;687 692 775 777 u
635 681 693 698 u;640 660 686 697 u;610 616 660 672 u;586 626 713 725 f;653 682 712 713 u;680 681 684 713 f;665 680 684 700 f;600 618 683 685 u
552 582 617 623 u;582 584 673 673 f;630 658 679 682 u;655 656 682 697 f;632 666 681 683 u;630 649 681 683 f;650 665 671 731 f;655 672 750 752 f
630 658 745 768 u;660 660 690 736 f;655 669 691 720 u;637 667 704 706 f;704 704 750 750 f;720 746 750 767 f;733 748 785 822 f;784 784 878 880 f
825 849 878 908 u;855 857 910 922 f;890 902 922 955 f;890 899 907 969 u;873 906 911 935 f;905 907 1005 1035 f;952 966 1001 1015 u;925 962 966 990 f
935 962 967 1000 f;935 965 985 990 f;967 982 1015 1030 f;987 1025 1032 1063 f;996 1001 1031 1063 u;941 997 1001 1063 f;902 930 1000 1002 u;895 912 930 935 u
895 913 978 980 f;928 976 985 997 f;935 950 978 982 u;897 926 949 953 u;814 826 926 928 u;825 828 895 903 f;878 891 912 912 f;866 895 912 912 u
862 893 912 922 f;912 913 960 985 f;955 957 1038 1050 f;1036 1037 1166 1166 f;1158 1164 1169 1208 f;1162 1170 1235 1235 f;1215 1236 1278 1278 f;1215 1246 1278 1278 u
1175 1236 1246 1275 f;1244 1245 1293 1325 f;1190 1227 1284 1292 u;1033 1131 1227 1227 u;1113 1117 1127 1165 f;908 1002 1129 1143 u;993 1003 1101 1170 f;1110 1111 1171 1255 f
1120 1167 1203 1253 f;1097 1122 1214 1222 u;1087 1123 1142 1190 f;980 1110 1140 1143 u;1042 1077 1120 1197 u;969 980 1072 1127 u;817 903 963 980 u;795 806 901 901 u
674 795 806 808 u;778 792 803 840 f;770 786 809 870 u;667 718 772 787 u;83 303 730 767 u;163 303 338 405 f;257 291 335 400 u;246 273 291 320 u
270 271 343 386 f;325 342 390 395 f;365 381 400 440 f;310 322 392 400 u;270 271 322 358 u;211 270 378 380 f;342 361 389 420 f;367 385 448 506 f
395 431 448 465 u;398 421 444 480 u;418 421 534 554 f;518 530 580 645 f;485 499 565 570 u;441 442 497 525 u;441 442 490 505 f;465 490 528 537 f
465 490 527 577 u;430 432 480 528 u;385 412 416 475 f;380 400 416 475 u;398 404 450 455 f;340 350 449 455 u;299 342 380 405 f;367 382 400 432 f
395 397 463 469 f;327 385 455 457 u;365 383 420 432 f;337 350 417 420 u;325 337 349 370 u;240 261 338 368 u;160 161 261 261 u;126 158 170 195 f
151 174 195 226 f;180 191 275 290 f;272 274 292 339 f;285 290 309 339 f;250 262 300 322 u` }, monoCandle);

plot('mt-candles', { x: 673, step: 4, top: 130, scale: 3, bars: `
1194 1225 1325 1325 u;1216 1227 1244 1262 f;1030 1053 1238 1310 u;1035 1053 1158 1223 f;1038 1065 1143 1158 u;894 1003 1092 1092 u;909 940 1003 1090 u;938 951 1022 1028 f
992 1009 1030 1062 u;834 895 1010 1046 u;789 888 906 920 f;858 900 972 990 f;813 850 970 978 u;756 846 860 894 u;788 852 917 957 f;825 913 934 960 u
777 858 914 930 u;744 844 858 858 u;840 843 1121 1131 f;1026 1033 1114 1182 u;1007 1033 1128 1182 f;1040 1060 1127 1248 u;924 940 1060 1060 u;800 841 940 975 u
820 840 962 965 f;843 874 958 958 u;723 871 897 905 f;855 891 930 957 f;670 671 940 940 u;525 547 670 690 u;354 370 556 576 u;237 283 370 390 u
60 202 283 306 u;202 205 461 480 f;417 460 575 594 f;495 538 571 630 u;477 523 659 759 f;538 640 664 664 u;586 588 622 674 u;588 603 656 674 f
534 574 655 744 u;402 538 574 574 u;489 550 779 816 f;681 742 767 818 u;507 544 742 777 u;492 541 545 648 f` }, monoCandle);

plot('nt-candles', { x: 1006, step: 3, top: 520, scale: 3, bars: `
216 226 277 277 g;226 226 248 272 r;235 247 268 278 r;255 268 270 295 g;246 270 296 320 m;285 295 307 320 r;295 307 350 350 r;310 340 342 383 g
280 290 342 342 g;247 270 290 312 m;255 268 298 330 r;255 268 290 290 g;216 236 268 270 g;216 226 268 268 r;216 220 268 268 g;183 226 256 256 m
256 257 307 341 r;280 306 308 308 g;256 285 308 308 o;256 268 290 300 o;216 226 290 290 g;200 215 235 248 o;196 206 235 248 m;235 246 257 268 r
230 247 257 268 m;246 247 290 290 r;236 246 268 278 g;235 246 248 250 g;205 216 246 257 g;195 225 246 257 g;205 216 236 246 g;216 217 268 268 r
256 268 270 290 g;226 268 270 280 g;246 268 328 330 r;306 328 340 350 o;340 341 370 372 r;360 370 400 412 r;365 390 392 400 g;340 361 391 400 g
361 362 402 412 r;400 412 486 490 r;472 486 565 648 r;520 540 565 608 g;495 515 540 558 o;485 512 516 530 g;453 505 515 520 o;480 500 505 515 g
470 485 505 515 m;455 455 505 506 g;399 423 455 456 g;420 433 464 466 r;420 425 464 465 g;415 420 473 515 r;435 467 474 495 o;430 440 474 515 m
349 381 455 455 g;280 308 383 385 g;225 226 308 320 g;205 238 268 320 m;132 132 268 290 g;132 134 185 216 m;132 145 185 206 g;132 134 155 160 r
155 156 185 195 r;153 184 196 215 o;162 184 216 218 r;165 184 206 236 g;175 184 195 205 m;132 134 196 196 g;103 123 135 145 o;115 123 125 125 g
80 82 123 125 g;70 92 155 155 r;113 123 134 145 o;95 124 134 155 m;123 124 134 145 o;80 92 123 134 g;39 60 92 105 o;60 61 124 132 r
105 123 125 134 g;110 113 124 145 m;90 113 125 135 m;92 113 125 134 o;113 114 134 165 m;113 123 165 185 r;113 123 165 196 g;113 113 135 145 o
103 113 134 145 g;103 113 134 155 r;132 134 163 180 r;153 163 175 210 o;165 176 186 186 r;183 195 257 268 r;225 236 246 275 m;235 236 270 278 r
246 268 290 310 m;265 278 290 300 o;246 278 280 310 g;277 278 341 371 r;307 320 330 345 o;290 320 322 345 g;280 318 320 340 g;290 318 330 345 o
320 328 350 362 r;330 348 355 372 g;310 340 355 372 g;320 328 341 382 g;278 290 328 345 g;262 278 290 320 o;268 278 328 340 r;300 325 330 345 g
285 298 328 330 o;280 290 300 310 g;216 226 292 298 g;226 228 268 270 r;255 268 290 312 m;256 278 290 290 r;262 288 320 332 m;290 320 370 372 r
360 362 455 455 r;360 455 457 457 g;440 455 486 487 m;440 455 486 490 g;485 495 525 530 r;470 505 515 525 g;453 485 515 540 g;490 500 537 548 r
470 485 535 540 g;369 433 486 490 g;380 430 435 455 g;288 370 433 445 g;350 370 435 465 m;420 421 473 528 r;450 475 490 525 m;420 433 490 505 g
410 430 440 455 g;340 430 433 465 g;390 410 415 485 g;340 348 412 420 g;225 250 340 350 g;216 225 290 290 g;144 215 225 235 g;205 216 235 240 r
205 225 235 265 g;132 175 226 235 g` }, colorCandle);

plot('nt-candles', { x: 1444, step: 3, top: 180, scale: 3, bars: `
720 915 1185 1200 g;822 922 925 990 g;885 907 925 980 o;873 894 896 905 g;884 895 937 937 r;915 936 967 970 r;957 960 968 1000 m;915 925 968 980 g
885 886 926 935 g;852 886 947 957 r;905 946 965 975 m;936 967 1000 1040 o;965 985 1000 1008 o;965 988 998 1018 o;987 988 1062 1070 r;1050 1075 1085 1130 g
1018 1030 1080 1083 g;1005 1008 1030 1050 o;1000 1008 1040 1042 r;1008 1030 1060 1060 r;1020 1030 1062 1083 g;998 998 1030 1050 g;945 988 990 1020 g;967 978 990 1018 o
977 978 1000 1010 r;940 946 1000 1005 g;906 937 958 967 m;957 967 970 990 g;966 967 1010 1018 r;937 967 1010 1013 g;945 958 988 990 r;925 952 980 980 g
925 935 940 945 g;863 886 936 940 g;812 822 886 887 g;792 812 825 850 m;800 833 845 855 m;822 845 895 905 r;885 895 920 930 g;885 900 920 930 g
873 887 920 930 g;801 813 876 887 g;812 822 835 840 g;700 708 820 870 g;700 722 770 820 m;700 730 772 780 g;585 688 742 745 o;627 648 680 730 o
650 657 688 700 r;675 686 690 710 g;597 607 690 710 g;543 605 615 630 o;598 615 650 660 m;555 577 658 660 g;522 576 592 612 o;533 577 635 650 m
565 605 637 655 g;522 587 618 628 o;513 577 580 590 g;565 577 752 765 r;688 700 750 795 o;677 700 752 760 r;700 710 752 815 g;628 638 700 702 g
543 577 638 660 g;555 577 650 650 r;565 587 650 650 g;492 587 600 610 g;565 597 630 645 m;462 472 630 638 g;370 400 465 486 g;277 286 412 412 g
195 247 278 300 o;92 183 247 250 g;175 184 340 350 r;340 348 400 402 g;348 390 402 420 o;348 380 465 525 m;390 462 465 475 g;420 432 452 455 o
430 433 465 487 r;390 410 465 525 m;310 390 420 425 o;370 400 535 540 r;485 505 535 558 g;370 400 535 540 g;370 402 422 465 m` }, colorCandle);

// Level pairs: x, width, blue y, red y, marker y
[[-7, 41, 807, 828], [261, 41, 693, 721, 702], [289, 41, 734, 751, 755], [313, 41, 776, 801, 789], [317, 41, 798, 810, 806],
 [329, 41, 810, 826, 807], [333, 41, 812, 828, 831], [337, 41, 814, 830, 831], [369, 41, 818, 840, 835], [345, 41, 832, 853, 853],
 [145, 41, 874, 913, 880], [117, 41, 900, 926, 924], [105, 41, 918, 935, 938], [429, 41, 908, 935, 925], [501, 41, 744, 778, 746],
 [513, 41, 550, 635, 629], [597, 41, 606, 638, 609], [601, 41, 606, 638, 609], [713, 41, 416, 459, 442], [757, 41, 466, 528, 478], [777, 41, 411, 470, 435],
 [33, 4, 763, 779, 770], [37, 1, 763, 779, 763]
].forEach(([x, w, blue, red, mark]) => {
  const left = Math.max(x, 13), width = x + w - left;
  el('mt-levels', 'rect', { x: left, y: blue - 1, width, height: 2, fill: '#0000ff' });
  el('mt-levels', 'rect', { x: left, y: red - 1, width, height: 2, fill: '#ff0000' });
  if (mark) el('mt-levels', 'path', { d: `M${x + .5} ${mark - 4}l3.500 4-3.500 4-3.500-4z`, fill: '#0000ff' });
});

// Left chart axes
for (let i = 0; i < 27; i++) {
  const y = Math.round(123 + i * 33.78);
  el('mt-axis', 'rect', { x: 909, y, width: 4, height: 1 });
  el('mt-axis', 'text', { x: 915, y: y + 4 }, (1245.25 - i * .6).toFixed(2));
}
[[305, '#000', '1241.92'], [405, '#0000ff', '1240.12'], [464, '#ff0000', '1239.08']].forEach(([y, fill, text]) => {
  el('mt-axis', 'rect', { x: 911, y, width: 41, height: 11, fill });
  el('mt-axis', 'text', { x: 915, y: y + 9, fill: '#fff' }, text);
});
['7 Feb 2017', '8 Feb 01:45', '8 Feb 03:05', '8 Feb 04:25', '8 Feb 05:45', '8 Feb 07:05', '8 Feb 08:25', '8 Feb 09:45', '8 Feb 11:05',
 '8 Feb 12:25', '8 Feb 13:45', '8 Feb 15:05', '8 Feb 16:25', '8 Feb 17:45'].forEach((text, i) => {
  el('mt-axis', 'rect', { x: 13 + i * 64, y: 1004, width: 1, height: 5 });
  el('mt-axis', 'text', { x: 12 + i * 64, y: 1017 }, text);
});

// Supply and demand zones: x, top, bottom, tested-to line, tone
const tones = { green: '#008000', red: '#ff0000', pink: '#f08080' };
[[999, 990, 1010, 1010], [999, 846, 880], [999, 736, 753, 743], [1130, 684, 736, 703], [1414, 653, 681], [1426, 609, 637], [1435, 592, 609],
 [1486, 530, 558, 541], [1540, 485, 500, 493], [1555, 478, 493], [1570, 451, 471, 455], [1627, 420, 455], [1645, 361, 397, 369], [1693, 348, 368],
 [1669, 282, 327, 0, 'pink'], [1657, 210, 262, 0, 'red']
].forEach(([x, top, bottom, tested, tone = 'green']) => {
  const width = 1854 - x;
  const split = tested || top;
  if (tested) {
    el('nt-zones', 'rect', { x, y: top, width, height: split - top, fill: '#90ee90', opacity: .5 });
    if (split < bottom) el('nt-zones', 'rect', { x, y: split - 2, width, height: 2, fill: '#fff', opacity: .6 });
  }
  el('nt-zones', 'rect', { x, y: split, width, height: bottom - split, fill: tones[tone], opacity: .5 });
  const side = x === 999 ? `M999 ${bottom + .5}` : `V${bottom + .5}`;
  el('nt-zones', 'path', { d: `M1854 ${top + .5}H${x + .5}${side}H1854`, fill: 'none', stroke: '#000' });
});

// Volume marks: x, then [width, y] for magenta, yellow and green
[[1657, [22, 227], [49, 234], [27, 258]], [1693, [25, 351], [0, 365], [40, 365]], [1627, [34, 434], [57, 437], [22, 452]],
 [1555, [65, 482], [74, 485], [40, 489]], [1435, [65, 598], [105, 602], [100, 606]], [1414, [99, 653], [109, 660], [58, 667]]
].forEach(([x, m, y, g]) => {
  el('nt-zones', 'rect', { x, y: g[1] - 1, width: g[0], height: 3, fill: '#00ff00' });
  el('nt-zones', 'rect', { x, y: m[1] - 1, width: m[0], height: 3, fill: '#ff00ff' });
  el('nt-zones', 'rect', { x, y: y[1] - 2, width: y[0], height: 4, fill: '#ffff00' });
});

// Right chart axes
for (let price = 1248; price >= 1224; price -= 2) {
  const y = Math.round(987 - (price - 1224) * 34.36);
  el('nt-axis', 'rect', { x: 1855, y, width: 6, height: 1 });
  el('nt-axis', 'text', { x: 1862, y: y + 4 }, price + ',0');
}
[[320, '#000', '1243,4', '#fff'], [540, '#ffc0cb', '1237,0', '#000'], [571, '#deb887', '1236,1', '#000']].forEach(([y, fill, text, ink]) => {
  el('nt-axis', 'path', { d: `M1855.5 ${y}l7-6.500h36v13h-36z`, fill, stroke: '#000' });
  el('nt-axis', 'text', { x: 1863, y: y + 4, fill: ink }, text);
});
[[1054, '23:00'], [1162, '2/8'], [1234, '05:00'], [1306, '07:00'], [1378, '09:00'], [1450, '11:00'], [1522, '13:00'], [1594, '15:00'],
 [1666, '17:00'], [1738, '19:00'], [1810, '21:00']].forEach(([x, text]) => {
  el('nt-axis', 'rect', { x, y: 1011, width: 1, height: 5 });
  el('nt-axis', 'text', { x, y: 1027, class: 'mid' }, text);
});
```
